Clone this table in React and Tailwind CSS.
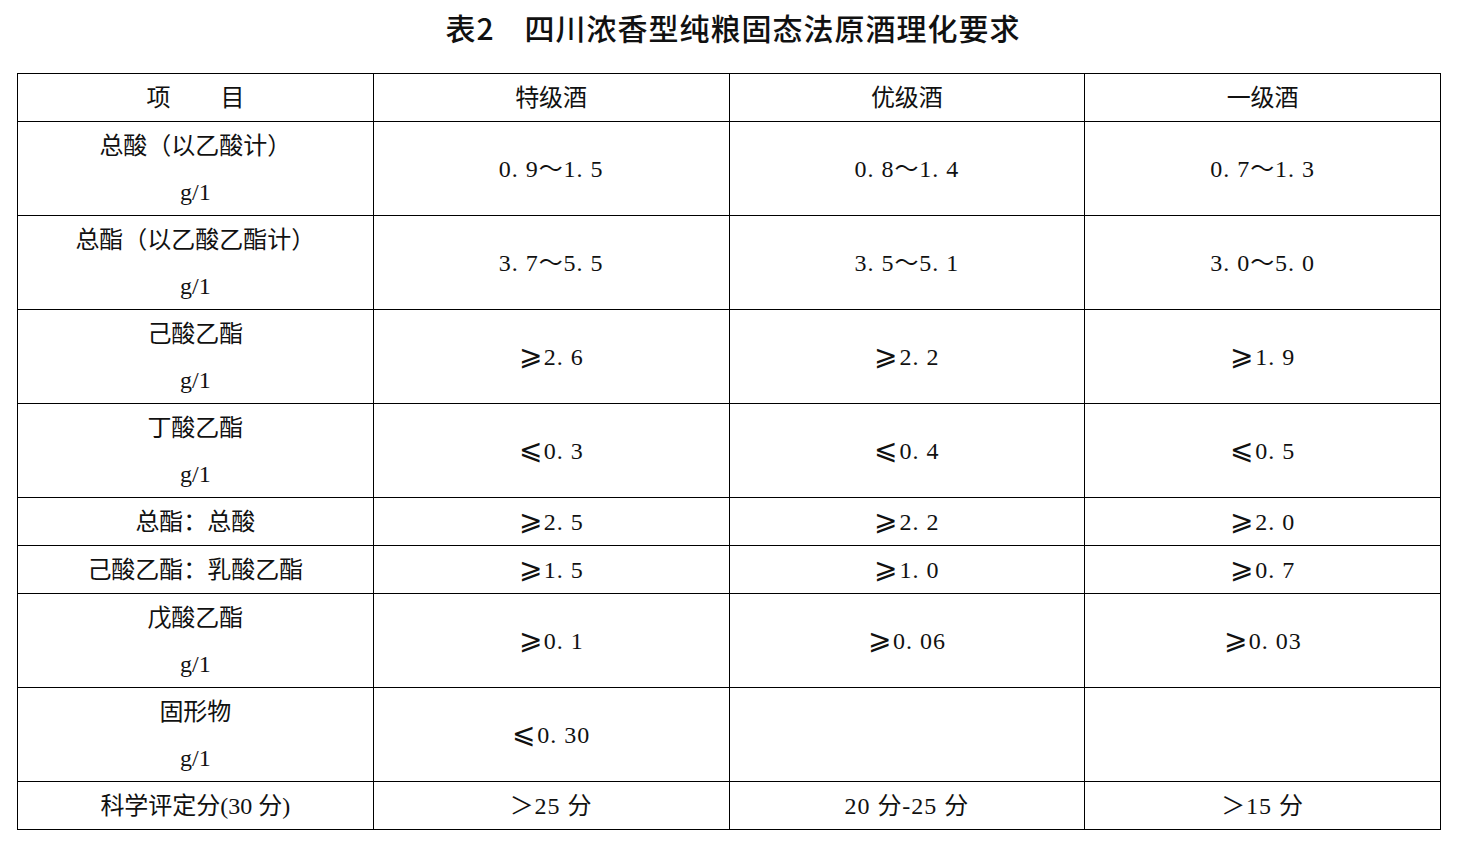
import React from 'react';

const rows = [
  { label: ['总酸（以乙酸计）', 'g/1'], vals: [['', '0. 9～1. 5'], ['', '0. 8～1. 4'], ['', '0. 7～1. 3']], tall: true },
  { label: ['总酯（以乙酸乙酯计）', 'g/1'], vals: [['', '3. 7～5. 5'], ['', '3. 5～5. 1'], ['', '3. 0～5. 0']], tall: true },
  { label: ['己酸乙酯', 'g/1'], vals: [['⩾', '2. 6'], ['⩾', '2. 2'], ['⩾', '1. 9']], tall: true },
  { label: ['丁酸乙酯', 'g/1'], vals: [['⩽', '0. 3'], ['⩽', '0. 4'], ['⩽', '0. 5']], tall: true },
  { label: ['总酯：总酸'], vals: [['⩾', '2. 5'], ['⩾', '2. 2'], ['⩾', '2. 0']] },
  { label: ['己酸乙酯：乳酸乙酯'], vals: [['⩾', '1. 5'], ['⩾', '1. 0'], ['⩾', '0. 7']] },
  { label: ['戊酸乙酯', 'g/1'], vals: [['⩾', '0. 1'], ['⩾', '0. 06'], ['⩾', '0. 03']], tall: true },
  { label: ['固形物', 'g/1'], vals: [['⩽', '0. 30'], ['', ''], ['', '']], tall: true },
  { label: ['科学评定分(30 分)'], vals: [['', '＞25 分'], ['', '20 分-25 分'], ['', '＞15 分']] },
];

const cell = 'border-[1.5px] border-black text-center align-middle p-0';

export default function App() {
  return (
    <div className="w-[1466px] h-[850px] bg-white text-[#111] pt-[10px]" style={{ fontFamily: '"Liberation Serif", "Noto Sans CJK SC", serif' }}>
      <h1
        className="text-center text-[30px] leading-[34px] font-medium tracking-[1px] h-[63px]"
        style={{ fontFamily: '"Noto Sans CJK SC", "Liberation Sans", sans-serif' }}
      >
        表2<span className="inline-block w-[30px]" />四川浓香型纯粮固态法原酒理化要求
      </h1>
      <table className="ml-[17px] w-[1424px] border-collapse table-fixed text-[24px]">
        <tbody>
          <tr className="h-[48px]">
            <td className={cell}>项<span className="inline-block w-[50px]" />目</td>
            <td className={cell}>特级酒</td>
            <td className={cell}>优级酒</td>
            <td className={cell}>一级酒</td>
          </tr>
          {rows.map((r, i) => (
            <tr key={i} className={r.tall ? 'h-[94px]' : 'h-[48px]'}>
              <td className={cell}>
                {r.label.map((l, j) => (
                  <div key={j} className="leading-[46px]">{l}</div>
                ))}
              </td>
              {r.vals.map(([sign, v], j) => (
                <td key={j} className={cell}>
                  <span className="leading-[30px]">
                    {sign && (
                      <span className="text-[28px] font-light mr-[2px]" style={{ fontFamily: '"DejaVu Serif", serif' }}>{sign}</span>
                    )}
                    <span className="tracking-[1px]">{v}</span>
                  </span>
                </td>
              ))}
            </tr>
          ))}
        </tbody>
      </table>
    </div>
  );
}
